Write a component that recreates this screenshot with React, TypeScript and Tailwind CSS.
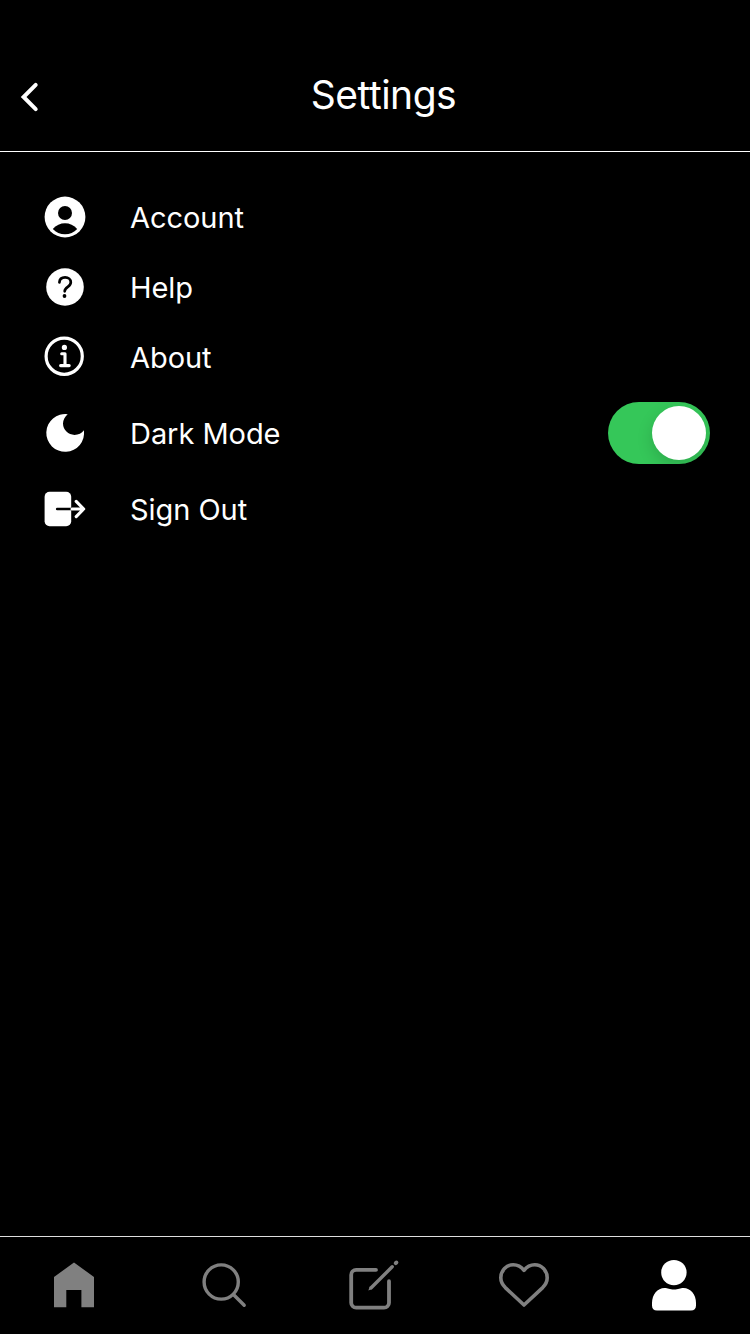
import { useState, type ReactNode } from "react";

function BackIcon() {
  return (
    <svg viewBox="15 77 30 40" className="h-10 w-[30px]" fill="none" stroke="white" strokeWidth="4" strokeLinecap="round" strokeLinejoin="miter">
      <path d="M35.7 84.9 23.6 97l12.1 12.1" />
    </svg>
  );
}

function AccountIcon() {
  return (
    <svg viewBox="42 192 50 50" className="size-[50px]">
      <circle cx="65" cy="217" r="20.4" fill="white" />
      <circle cx="65" cy="213" r="7" fill="black" />
      <path d="M52.8 229C56 225 60.5 223.2 65 223.2S74 225 77.2 229C74 232.5 69.7 234.3 65 234.3S56 232.5 52.8 229Z" fill="black" />
    </svg>
  );
}

function HelpIcon() {
  return (
    <svg viewBox="42 262 50 50" className="size-[50px]">
      <circle cx="65" cy="287" r="18.8" fill="white" />
      <path d="M59.4 282.3C59.6 279.2 62 277.4 65.1 277.4C68.4 277.4 70.8 279.4 70.8 282.2C70.8 284.4 69.5 285.6 67.8 286.8C65.6 288.3 64.7 289.3 64.7 291.3" fill="none" stroke="black" strokeWidth="2.7" strokeLinecap="round" />
      <circle cx="64.5" cy="296" r="1.9" fill="black" />
    </svg>
  );
}

function AboutIcon() {
  return (
    <svg viewBox="42 332 50 50" className="size-[50px]" fill="none" stroke="white" strokeLinecap="round" strokeLinejoin="round">
      <circle cx="64.2" cy="356.2" r="18.1" strokeWidth="3.2" />
      <circle cx="64.4" cy="347.4" r="2.6" fill="white" stroke="none" />
      <path d="M61.7 353.8H65V365.3M60.6 365.6H69.2" strokeWidth="3.1" />
    </svg>
  );
}

function MoonIcon() {
  return (
    <svg viewBox="42 408 50 50" className="size-[50px]" fill="white">
      <path d="M67.7 414.2A18.9 18.9 0 1 0 83.9 430.2C81.8 433 78.500 434.900 74.500 434.900A11.500 11.500 0 0 1 63 423.600C63 420 64.900 416.400 67.700 414.200Z" />
    </svg>
  );
}

function SignOutIcon() {
  return (
    <svg viewBox="42 484 50 50" className="size-[50px]" fill="none" strokeLinecap="round" strokeLinejoin="round">
      <rect x="44.6" y="491.7" width="26.6" height="34.5" rx="5" fill="white" />
      <path d="M57.2 509H71.2" stroke="black" strokeWidth="2.6" />
      <path d="M72 509H83.5M76.2 501.4L83.7 509L76.2 516.6" stroke="white" strokeWidth="3.1" />
    </svg>
  );
}

function Row({ icon, label, children }: { icon: ReactNode; label: string; children?: ReactNode }) {
  return (
    <div className={`flex items-center pr-10 pl-[42px] ${children ? "h-[82px]" : "h-[70px]"}`}>
      {icon}
      <span className="ml-[38px] flex-1 pt-0.5 text-[29px] leading-9 font-[370] tracking-[-0.05px]">{label}</span>
      {children}
    </div>
  );
}

function Toggle() {
  const [on, setOn] = useState(true);
  return (
    <button
      role="switch"
      aria-checked={on}
      onClick={() => setOn(!on)}
      className={`flex h-[62px] w-[102px] items-center overflow-hidden rounded-full p-1 ${on ? "justify-end bg-[#35c759]" : "justify-start bg-[#39393d]"}`}
    >
      <span className="size-[54px] rounded-full bg-white shadow-[0_6px_16px_rgba(0,0,0,0.15)]" />
    </button>
  );
}

function Tab({ children }: { children: ReactNode }) {
  return <button className="flex justify-center pt-[18px]">{children}</button>;
}

export default function App() {
  return (
    <div className="flex h-[1334px] w-[750px] flex-col bg-black font-['Inter',sans-serif] text-white">
      <header className="grid h-[152px] grid-cols-[1fr_auto_1fr] items-center border-b border-white pt-[42px]">
        <button className="ml-[15px] w-[30px]">
          <BackIcon />
        </button>
        <h1 className="pb-1 pl-[17px] text-[39px] leading-[46px] font-[370] tracking-[-0.5px]">Settings</h1>
      </header>

      <main className="flex-1 pt-[30px]">
        <Row icon={<AccountIcon />} label="Account" />
        <Row icon={<HelpIcon />} label="Help" />
        <Row icon={<AboutIcon />} label="About" />
        <Row icon={<MoonIcon />} label="Dark Mode">
          <Toggle />
        </Row>
        <Row icon={<SignOutIcon />} label="Sign Out" />
      </main>

      <nav className="grid h-[98px] grid-cols-5 border-t border-[#dedede]">
        <Tab>
          <svg viewBox="45 1255 60 60" className="size-[60px]">
            <path d="M74 1262.5 94 1277V1307.3H81.4V1290H66.3V1307.3H54V1277Z" fill="#808080" />
          </svg>
        </Tab>
        <Tab>
          <svg viewBox="194.8 1255 60 60" className="size-[60px]" fill="none" stroke="#808080" strokeWidth="3.4" strokeLinecap="round">
            <circle cx="221" cy="1282" r="17.1" />
            <path d="M233.7 1295 244 1305.3" />
          </svg>
        </Tab>
        <Tab>
          <svg viewBox="345 1255 60 60" className="size-[60px]" fill="none" stroke="#808080" strokeWidth="3.8" strokeLinecap="round">
            <path d="M376 1269.9H356.2A5 5 0 0 0 351.2 1274.9V1302.7A5 5 0 0 0 356.2 1307.7H384A5 5 0 0 0 389 1302.7V1281.2" />
            <path d="M371.2 1287.7 392.2 1266.8" strokeWidth="3.4" />
            <path d="M368.3 1290.5 369.8 1286.5 372.3 1289Z" fill="#808080" stroke="none" />
            <path d="M395.7 1263.2 396.4 1262.5" strokeWidth="3.9" />
          </svg>
        </Tab>
        <Tab>
          <svg viewBox="495 1255 60 60" className="size-[60px]" fill="none" stroke="#808080" strokeWidth="3.6" strokeLinejoin="round">
            <path d="M524 1305 505.3 1287.6C502 1284.3 500.8 1281.2 500.8 1277.8C500.8 1270.5 506.5 1264.8 513.3 1264.8C517.5 1264.8 521 1266.5 524 1270.3C527 1266.5 530.5 1264.8 534.7 1264.8C541.5 1264.8 547.2 1270.5 547.2 1277.8C547.2 1281.2 546 1284.3 542.7 1287.6Z" />
          </svg>
        </Tab>
        <Tab>
          <svg viewBox="645 1255 60 60" className="size-[60px]" fill="white">
            <circle cx="673.9" cy="1272.6" r="12.7" />
            <path d="M652 1305.5V1303C652 1294.5 657.5 1288 664.5 1288C668 1288 669.5 1289.5 674 1289.5S680 1288 683.5 1288C690.5 1288 696 1294.5 696 1303V1305.5C696 1308.7 694.2 1310.6 691 1310.6H657C653.8 1310.6 652 1308.7 652 1305.5Z" />
          </svg>
        </Tab>
      </nav>
    </div>
  );
}
